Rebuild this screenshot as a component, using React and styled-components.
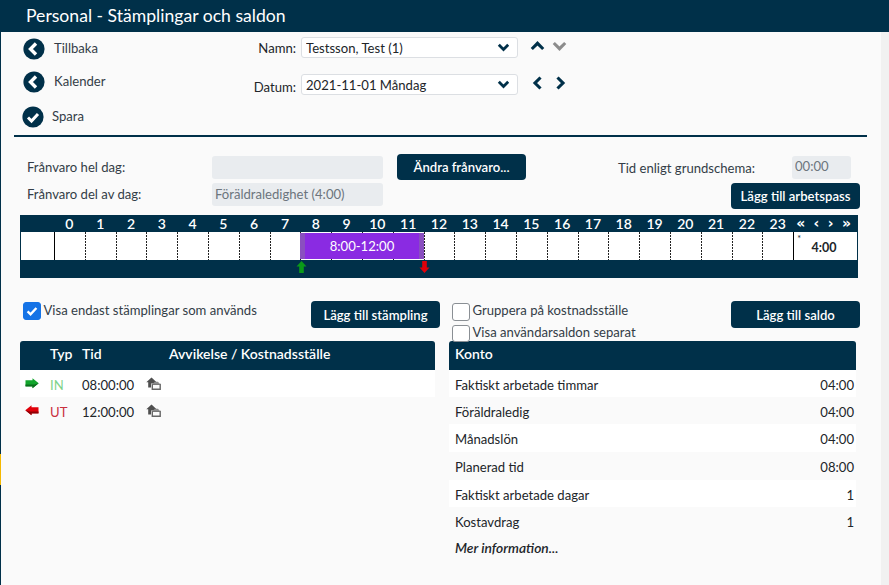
import React from "react";
import styled, { createGlobalStyle } from "styled-components";

const NAVY = "#003049";

const GlobalStyle = createGlobalStyle`
  html, body {
    margin: 0;
    padding: 0;
    background: #fafafa;
    overflow: hidden;
  }
  body, input, select, button {
    font-family: Lato, "Open Sans", sans-serif;
    font-size: 13.1px;
    color: #212529;
  }
  * {
    box-sizing: border-box;
  }
`;

const chevronDown = encodeURIComponent(
  `<svg xmlns="http://www.w3.org/2000/svg" width="13" height="9" viewBox="0 0 13 9"><path d="M1.8 1.8l4.7 4.7 4.7-4.7" fill="none" stroke="${NAVY}" stroke-width="2.8"/></svg>`
);
const tick = encodeURIComponent(
  `<svg xmlns="http://www.w3.org/2000/svg" viewBox="0 0 20 20"><path d="M4.5 10.5l3.7 3.7 7.3-8" fill="none" stroke="#fff" stroke-width="3"/></svg>`
);

const hours = Array.from({ length: 24 }, (_, i) => i);

const stamps = [
  { type: "IN", time: "08:00:00", color: "#7fd38a" },
  { type: "UT", time: "12:00:00", color: "#c9303e" },
];

const balances = [
  { name: "Faktiskt arbetade timmar", value: "04:00", height: 27 },
  { name: "Föräldraledig", value: "04:00", height: 27 },
  { name: "Månadslön", value: "04:00", height: 28 },
  { name: "Planerad tid", value: "08:00", height: 28 },
  { name: "Faktiskt arbetade dagar", value: "1", height: 27 },
  { name: "Kostavdrag", value: "1", height: 27 },
];

const CircleIcon = ({ check }) => (
  <svg width="22" height="22" viewBox="0 0 22 22">
    <circle cx="11" cy="11" r="10.6" fill={NAVY} />
    {check ? (
      <path d="M6 11.5l3.5 3.5 6.5-7" fill="none" stroke="#fff" strokeWidth="3" />
    ) : (
      <path d="M13 5.5L7.5 11l5.5 5.5" fill="none" stroke="#fff" strokeWidth="3.4" />
    )}
  </svg>
);

const Chevron = ({ d, color = NAVY }) => (
  <svg width="15" height="14" viewBox="0 0 15 14">
    <path d={d} fill="none" stroke={color} strokeWidth="3.1" />
  </svg>
);

const MarkerArrow = ({ up }) => (
  <svg width="11" height="14" viewBox="0 0 11 14">
    {up ? (
      <path d="M5.5 1L10.5 6.5H7.8V13H3.2V6.5H.5z" fill="#0a9a18" />
    ) : (
      <path d="M3.2 1H7.8V7.5H10.5L5.5 13 .5 7.5H3.2z" fill="#e0000a" />
    )}
  </svg>
);

const RowArrow = ({ right }) => (
  <svg width="14" height="11" viewBox="0 0 14 11">
    {right ? (
      <>
        <path d="M.5 2.2H7.5V.3L13.7 5.2 7.5 10.2V8.2H.5z" fill="#12a52c" />
        <path d="M.5 6.6H9.2L13.7 5.2 7.5 10.2V8.4H.5z" fill="#0b6e1c" />
      </>
    ) : (
      <>
        <path d="M13.5 2.2H6.5V.3L.3 5.2 6.5 10.2V8.2H13.5z" fill="#e0000a" />
        <path d="M13.5 6.6H4.8L.3 5.2 6.5 10.2V8.4H13.5z" fill="#8f0006" />
      </>
    )}
  </svg>
);

const CostIcon = () => (
  <svg width="15" height="13" viewBox="0 0 15 13">
    <path d="M5.5 .5L.3 5.3H2.2V10.5H5V6.4H9.6L10.6 5.2z" fill="#4f4f4f" />
    <path d="M6.3 7.4H14.2V12.3H6.3z" fill="#fafafa" stroke="#666" strokeWidth="1.4" />
    <path d="M6.5 7.4L8.7 4.8H12L14.2 7.4z" fill="#8a8a8a" />
  </svg>
);

const App = () => {
  return (
    <Page>
      <GlobalStyle />
      <Header>Personal - Stämplingar och saldon</Header>
      <Body>
        <Rail>
          <RailMark />
        </Rail>
        <Content>
          <TopBar>
            <Actions>
              <Action>
                <CircleIcon />
                <ActionText>Tillbaka</ActionText>
              </Action>
              <Action>
                <CircleIcon />
                <ActionText>Kalender</ActionText>
              </Action>
              <Action $shift={-1} $gap={8} $top={1}>
                <CircleIcon check />
                <ActionText>Spara</ActionText>
              </Action>
            </Actions>
            <Picker>
              <PickerRow>
                <PickerLabel>Namn:</PickerLabel>
                <Select defaultValue="test">
                  <option value="test">Testsson, Test (1)</option>
                </Select>
                <Stepper>
                  <Chevron d="M1.8 10l5.7-5.7 5.7 5.7" />
                  <Chevron d="M1.8 4l5.7 5.7 5.7-5.7" color="#8c8c8c" />
                </Stepper>
              </PickerRow>
              <PickerRow>
                <PickerLabel $drop>Datum:</PickerLabel>
                <Select defaultValue="d">
                  <option value="d">2021-11-01 Måndag</option>
                </Select>
                <Stepper>
                  <Chevron d="M10.5 1.5L5 7l5.5 5.5" />
                  <Chevron d="M5.5 1.5L11 7l-5.5 5.5" />
                </Stepper>
              </PickerRow>
            </Picker>
          </TopBar>

          <Absence>
            <AbsenceRow>
              <AbsenceLabel $drop={1}>Frånvaro hel dag:</AbsenceLabel>
              <Field $width={171} readOnly value="" />
              <Button $width={129} $left={14}>Ändra frånvaro...</Button>
              <ScheduleLabel>Tid enligt grundschema:</ScheduleLabel>
              <Field $width={59} readOnly value="00:00" />
            </AbsenceRow>
            <AbsenceRow $second>
              <AbsenceLabel>Frånvaro del av dag:</AbsenceLabel>
              <Field $width={171} readOnly value="Föräldraledighet (4:00)" />
              <Button $width={129} $push>Lägg till arbetspass</Button>
            </AbsenceRow>
          </Absence>

          <Timeline>
            <HourCell />
            {hours.map((h) => (
              <HourCell key={h}>{h}</HourCell>
            ))}
            <PagerCell>
              <span>«</span>
              <span>‹</span>
              <span>›</span>
              <span>»</span>
            </PagerCell>

            <SlotCell $plain />
            {hours.map((h) => (
              <SlotCell key={h} $solid={h === 0} />
            ))}
            <TotalCell>
              <Star>*</Star>
              4:00
            </TotalCell>
            <TimelineFoot />

            <ShiftBar>8:00-12:00</ShiftBar>
            <Marker $left={275}>
              <MarkerArrow up />
            </Marker>
            <Marker $left={398}>
              <MarkerArrow />
            </Marker>
          </Timeline>

          <Columns>
            <Column>
              <Controls>
                <CheckLine $left={3} $top={1}>
                  <Check type="checkbox" defaultChecked />
                  <span>Visa endast stämplingar som används</span>
                </CheckLine>
                <Button $width={129} $tall>Lägg till stämpling</Button>
              </Controls>
              <TableHead>
                <StampGrid>
                  <span />
                  <span>Typ</span>
                  <span>Tid</span>
                  <span>Avvikelse / Kostnadsställe</span>
                </StampGrid>
              </TableHead>
              {stamps.map((s, i) => (
                <StampRow key={s.type} $odd={i % 2 === 0}>
                  <RowArrow right={s.type === "IN"} />
                  <StampType $color={s.color}>{s.type}</StampType>
                  <span>{s.time}</span>
                  <CostIcon />
                </StampRow>
              ))}
            </Column>

            <Column>
              <Controls>
                <CheckStack>
                  <CheckLine $tight>
                    <Check type="checkbox" />
                    <span>Gruppera på kostnadsställe</span>
                  </CheckLine>
                  <CheckLine $tight>
                    <Check type="checkbox" />
                    <span>Visa användarsaldon separat</span>
                  </CheckLine>
                </CheckStack>
                <Button $width={129} $tall $over={4}>Lägg till saldo</Button>
              </Controls>
              <TableHead $pad={6}>Konto</TableHead>
              {balances.map((b, i) => (
                <BalanceRow key={b.name} $odd={i % 2 === 0} $height={b.height}>
                  <span>{b.name}</span>
                  <span>{b.value}</span>
                </BalanceRow>
              ))}
              <MoreLink>Mer information...</MoreLink>
            </Column>
          </Columns>
        </Content>
        <Scrollbar />
      </Body>
    </Page>
  );
};

const Page = styled.div`
  display: flex;
  flex-direction: column;
  width: 889px;
  height: 585px;
  overflow: hidden;
`;
const Header = styled.h1`
  flex: none;
  height: 32px;
  margin: 0;
  padding-left: 26px;
  background: ${NAVY};
  color: #fff;
  font-size: 17.6px;
  font-weight: 400;
  line-height: 31px;
`;
const Body = styled.div`
  flex: 1;
  display: flex;
  min-height: 0;
`;
const Rail = styled.div`
  flex: none;
  width: 1px;
  padding-top: 422px;
  background: ${NAVY};
`;
const RailMark = styled.div`
  height: 31px;
  background: #f5b800;
`;
const Content = styled.main`
  flex: 1;
  min-width: 0;
`;
const Scrollbar = styled.div`
  flex: none;
  width: 8px;
  background: #f1f1f1;
`;

const TopBar = styled.div`
  display: flex;
  height: 105px;
  margin: 0 14px 0 13px;
  border-bottom: 2px solid ${NAVY};
`;
const Actions = styled.nav`
  flex: none;
  width: 225px;
  padding: 0 0 0 9px;
`;
const Action = styled.div`
  display: flex;
  align-items: center;
  gap: ${(p) => p.$gap ?? 9}px;
  height: 33.5px;
  margin-top: ${(p) => p.$top ?? 0}px;
  margin-left: ${(p) => p.$shift ?? 0}px;
`;
const ActionText = styled.span`
  margin-top: -2px;
  color: #333d47;
`;
const Picker = styled.div`
  display: flex;
  flex-direction: column;
  gap: 16px;
  padding-top: 5px;
`;
const PickerRow = styled.div`
  display: flex;
  align-items: center;
  height: 21px;
`;
const PickerLabel = styled.label`
  width: 58px;
  margin-right: 5px;
  margin-left: -1px;
  text-align: right;
  transform: translateY(${(p) => (p.$drop ? 2 : 0)}px);
`;
const Select = styled.select`
  width: 217px;
  height: 21px;
  padding: 0 22px 0 4px;
  appearance: none;
  border: 1px solid #dcdfe3;
  border-radius: 3px;
  background: #fff url("data:image/svg+xml,${chevronDown}") no-repeat right 7px center;
`;
const Stepper = styled.div`
  display: flex;
  gap: 7px;
  margin: -3px 0 0 12px;
`;

const Absence = styled.section`
  display: flex;
  flex-direction: column;
  gap: 3px;
  height: 78px;
  padding: 17px 28px 0 26px;
`;
const AbsenceRow = styled.div`
  display: flex;
  align-items: ${(p) => (p.$second ? "flex-start" : "center")};
  height: 26px;
`;
const AbsenceLabel = styled.span`
  flex: none;
  width: 185px;
  margin-top: ${(p) => p.$drop ?? 0}px;
  line-height: 23px;
  color: #333d47;
`;
const ScheduleLabel = styled.span`
  flex: none;
  width: 174px;
  margin: 2px 0 0 92px;
  color: #333d47;
`;
const Field = styled.input`
  flex: none;
  width: ${(p) => p.$width}px;
  height: 23px;
  padding: 0 3px 2px;
  border: 0;
  border-radius: 3px;
  outline: none;
  background: #e9ecef;
  color: #6c757d;
`;
const Button = styled.button`
  flex: none;
  width: ${(p) => p.$width}px;
  height: ${(p) => (p.$tall ? 27 : 26)}px;
  margin-left: ${(p) => (p.$push ? "auto" : `${p.$left ?? 0}px`)};
  margin-right: ${(p) => (p.$over ? -p.$over : p.$tall ? -5 : p.$push ? -7 : 0)}px;
  padding: 0;
  border: 0;
  border-radius: 4px;
  background: ${NAVY};
  color: #fff;
  font-weight: 600;
`;

const Timeline = styled.section`
  position: relative;
  display: grid;
  grid-template-columns: 33px repeat(24, 30.8px) 1fr;
  grid-template-rows: 17px 28px 18px;
  width: 838px;
  margin-left: 19px;
  border-left: 1px solid ${NAVY};
  border-right: 1px solid ${NAVY};
  background: #fff;
`;
const HourCell = styled.div`
  background: ${NAVY};
  color: #fff;
  font-size: 14px;
  font-weight: 600;
  line-height: 17px;
  text-align: center;
`;
const PagerCell = styled.div`
  display: flex;
  justify-content: space-between;
  padding: 0 6px 0 3px;
  background: ${NAVY};
  color: #fff;
  font-family: "DejaVu Sans", sans-serif;
  font-size: 14px;
  font-weight: 700;
  line-height: 16px;
`;
const SlotCell = styled.div`
  background-image: ${(p) =>
    p.$plain || p.$solid
      ? "none"
      : "repeating-linear-gradient(to bottom, #222 0 2px, transparent 2px 3px)"};
  background-size: 1px 100%;
  background-repeat: no-repeat;
  border-left: ${(p) => (p.$solid ? "1px solid #000" : "0")};
`;
const TotalCell = styled.div`
  position: relative;
  padding-right: 3px;
  border-left: 1px solid #000;
  font-size: 12.5px;
  font-weight: 700;
  line-height: 31px;
  text-align: center;
`;
const Star = styled.span`
  position: absolute;
  top: -9px;
  left: 3px;
  font-size: 9px;
  font-weight: 400;
`;
const TimelineFoot = styled.div`
  grid-column: 1 / -1;
  background: ${NAVY};
`;
const ShiftBar = styled.div`
  position: absolute;
  top: 18px;
  left: 279px;
  width: 124px;
  height: 26px;
  padding: 0 5px;
  background: #8a2be2;
  box-shadow: inset 5px 0 0 #8a4fc0, inset -5px 0 0 #8a4fc0;
  color: #fff;
  line-height: 26px;
  text-align: center;
`;
const Marker = styled.div`
  position: absolute;
  top: 45px;
  left: ${(p) => p.$left}px;
  line-height: 0;
`;

const Columns = styled.section`
  display: grid;
  grid-template-columns: 415px 407px;
  column-gap: 14px;
  margin: 23px 0 0 19px;
`;
const Column = styled.div`
  min-width: 0;
`;
const Controls = styled.div`
  display: flex;
  justify-content: space-between;
  align-items: flex-start;
  height: 40px;
`;
const CheckStack = styled.div`
  display: flex;
  flex-direction: column;
  gap: 4px;
  padding: 2px 0 0 3px;
`;
const CheckLine = styled.label`
  display: flex;
  align-items: flex-start;
  gap: 3px;
  margin-left: ${(p) => p.$left ?? 0}px;
  padding-top: ${(p) => p.$top ?? 0}px;
  color: #333d47;
  line-height: ${(p) => (p.$tight ? 14 : 16)}px;
`;
const Check = styled.input`
  flex: none;
  width: 17.5px;
  height: 17.5px;
  margin: 0;
  appearance: none;
  border: 1px solid #8a8f94;
  border-radius: 3px;
  background: #fff;
  &:checked {
    border-color: #1573e6;
    background: #1573e6 url("data:image/svg+xml,${tick}") center / 100% no-repeat;
  }
`;
const TableHead = styled.div`
  height: 29px;
  padding-left: ${(p) => p.$pad ?? 0}px;
  border-radius: 3px 3px 0 0;
  background: ${NAVY};
  color: #fff;
  font-size: 14px;
  font-weight: 600;
  line-height: 26px;
`;
const StampGrid = styled.div`
  display: grid;
  grid-template-columns: 30px 32px 87px 1fr;
`;
const StampRow = styled.div`
  display: grid;
  grid-template-columns: 25px 32px 64px 1fr;
  align-items: center;
  height: 27px;
  padding: 2px 0 0 5px;
  background: ${(p) => (p.$odd ? "#fff" : "transparent")};
  & > svg {
    margin-top: -2px;
  }
`;
const StampType = styled.span`
  color: ${(p) => p.$color};
`;
const BalanceRow = styled.div`
  display: flex;
  justify-content: space-between;
  align-items: center;
  height: ${(p) => p.$height}px;
  padding: 2px 2px 0 6px;
  background: ${(p) => (p.$odd ? "#fff" : "transparent")};
`;
const MoreLink = styled.div`
  padding: 5px 0 0 6px;
  font-size: 13.8px;
  font-style: italic;
  font-weight: 600;
  color: #212529;
`;

export default App;
